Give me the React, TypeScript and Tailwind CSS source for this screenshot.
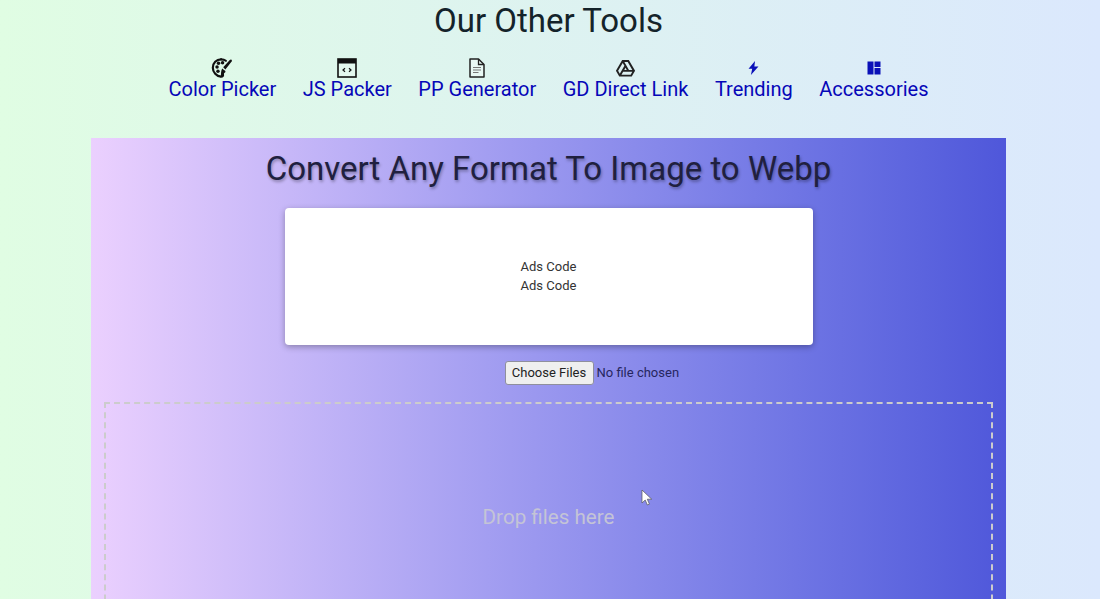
import { RiDriveLine } from "react-icons/ri";

function PaletteIcon() {
  return (
    <svg width="22" height="22" viewBox="0 0 24 24" fill="none">
      <path d="M11 2.5C5.8 2.5 2 6.5 2 11.6c0 5 4 9.6 8.8 9.9 2 .1 2.6-1.2 2.2-2.6-.4-1.5.1-2.7 1.6-2.9" stroke="#111" strokeWidth="2.4" strokeLinecap="round" />
      <path d="M11 2.5c2 0 3.8.5 5.2 1.6" stroke="#111" strokeWidth="2.4" strokeLinecap="round" />
      <circle cx="6.6" cy="11" r="1.9" fill="#111" />
      <circle cx="8.2" cy="6.8" r="1.9" fill="#111" />
      <circle cx="12.6" cy="6.2" r="1.9" fill="#111" />
      <circle cx="7.6" cy="15.6" r="1.9" fill="#111" />
      <path d="M22.5 3.2c.6.6.4 1.4-.2 2.1l-6.6 8.2-2.4-2.2 7.2-7.9c.6-.6 1.4-.8 2-.2z" fill="#111" />
      <path d="M12.4 12.6l2.6 2.4c-.4 3-1.6 6.4-5 7.4 1-1.4.8-3.8 1-5.4.1-1.3.6-3.6 1.4-4.4z" fill="#111" />
    </svg>
  );
}

function WindowIcon() {
  return (
    <svg width="20" height="20" viewBox="0 0 20 20" fill="none">
      <rect x="1" y="1" width="18" height="18" fill="#fff" fillOpacity="0.15" stroke="#111" strokeWidth="1.6" />
      <rect x="1" y="1" width="18" height="4.5" fill="#111" />
      <path d="M8 10.2 6 12l2 1.8M12 10.2l2 1.8-2 1.8" stroke="#111" strokeWidth="1.2" />
    </svg>
  );
}

function PageIcon() {
  return (
    <svg width="18" height="20" viewBox="0 0 18 20" fill="none">
      <path d="M2 1h8.5L16 6.5V19H2z" fill="#fff" fillOpacity="0.35" stroke="#222" strokeWidth="1.5" strokeLinejoin="round" />
      <path d="M10.5 1v5.5H16" stroke="#222" strokeWidth="1.3" />
      <path d="M5 9.5h8M5 12h8M5 14.5h5.5" stroke="#777" strokeWidth="1.2" />
    </svg>
  );
}

function BoltIcon() {
  return (
    <svg width="11" height="14" viewBox="0 0 10 13">
      <path d="M6.4 0 .4 7.2h3.4L2.6 13l7-8H5.8z" fill="#0a10b8" />
    </svg>
  );
}

function DashIcon() {
  return (
    <svg width="14" height="14" viewBox="0 0 14 14" fill="#0a10b8">
      <rect x="0.5" y="0.5" width="6" height="13" />
      <rect x="7.5" y="0.5" width="6" height="5.5" />
      <rect x="7.5" y="7" width="6" height="6.5" />
    </svg>
  );
}

const tools = [
  { label: "Color Picker", icon: <PaletteIcon /> },
  { label: "JS Packer", icon: <WindowIcon /> },
  { label: "PP Generator", icon: <PageIcon /> },
  { label: "GD Direct Link", icon: <RiDriveLine size={23} color="#222" /> },
  { label: "Trending", icon: <BoltIcon /> },
  { label: "Accessories", icon: <DashIcon /> },
];

export default function App() {
  return (
    <div className="relative h-[599px] w-[1100px] overflow-hidden bg-gradient-to-r from-[#e0fde3] to-[#dbe8fd] font-['Roboto',sans-serif] text-[#1c1c1c]">
      <div className="w-[1097px]">
        <h1 className="h-[40px] pt-[2px] text-center text-[33px] leading-[38px] font-normal text-[#14232a]">
          Our Other Tools
        </h1>
        <nav className="flex h-[98px] justify-center gap-[26.5px] pt-[17px]">
          {tools.map((t) => (
            <a key={t.label} href="#" className="flex flex-col items-center text-[20px] leading-[20px] text-[#0606b8]">
              <span className="flex h-[22px] items-center justify-center">{t.icon}</span>
              {t.label}
            </a>
          ))}
        </nav>
        <main className="mx-auto h-[470px] w-[915px] bg-gradient-to-r from-[#ebd0fe] to-[#4f57da] px-[13px] pt-[12px]">
          <h2 className="text-center text-[33px] leading-[38px] font-normal text-[#20203f] [text-shadow:1px_2px_3px_rgba(0,0,0,0.3)]">
            Convert Any Format To Image to Webp
          </h2>
          <div className="mx-auto mt-[20px] flex h-[137px] w-[528px] flex-col items-center justify-center rounded-[4px] bg-white pb-[2px] text-[13px] leading-[19px] text-[#333] shadow-[0_2px_6px_rgba(0,0,0,0.3)]">
            <div>Ads Code</div>
            <div>Ads Code</div>
          </div>
          <div className="mt-[15px] flex h-[26px] items-center justify-center pl-[88px] text-[13px] text-[#26265e]">
            <button className="h-[24px] w-[89px] rounded-[3px] border border-[#8f8f9d] bg-[#efefef] text-[13px] text-[#222]">
              Choose Files
            </button>
            <span className="ml-[3px] w-[84px]">No file chosen</span>
          </div>
          <div className="mt-[16px] flex h-[300px] items-start justify-center border-2 border-dashed border-[#cccccc] pt-[99px] text-[20.6px] leading-[28px] text-[#c4c4d6]">
            Drop files here
          </div>
        </main>
      </div>
      <svg className="absolute left-[641px] top-[489px]" width="13" height="18" viewBox="0 0 13 18">
        <path d="M1 1v13l3.2-3 2.2 5 2-.9-2.1-4.9h4.4z" fill="#fff" stroke="#555" strokeWidth="0.7" />
      </svg>
    </div>
  );
}
